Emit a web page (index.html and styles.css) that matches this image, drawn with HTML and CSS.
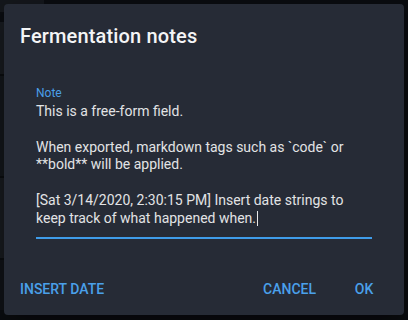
FILE: index.html
```html
<!DOCTYPE html>
<html lang="en">
<head>
<meta charset="utf-8">
<title>Fermentation notes</title>
<link rel="stylesheet" href="styles.css">
</head>
<body>
<div class="backdrop">
  <div class="bg-top"></div>
  <div class="bg-side">
    <div class="bg-row r1"></div>
    <div class="bg-row r2"></div>
    <div class="bg-row r3"></div>
    <div class="bg-row r4"></div>
  </div>
</div>
<div class="dialog">
  <h2 class="title">Fermentation notes</h2>
  <div class="content">
    <div class="field">
      <label class="label">Note</label>
      <div class="input">This is a free-form field.<br><br>When exported, markdown tags such as `code` or<br>**bold** will be applied.<br><br>[Sat 3/14/2020, 2:30:15 PM] Insert date strings to<br>keep track of what happened when.<span class="caret"></span></div>
    </div>
  </div>
  <div class="actions">
    <button class="btn">INSERT DATE</button>
    <span class="spacer"></span>
    <button class="btn">CANCEL</button>
    <button class="btn">OK</button>
  </div>
</div>
</body>
</html>
```

FILE: styles.css
```css
html, body {
  margin: 0;
  padding: 0;
}
body {
  width: 408px;
  height: 320px;
  overflow: hidden;
  background: #0b0d11;
  font-family: Roboto, "Liberation Sans", sans-serif;
  position: relative;
}
.backdrop {
  width: 408px;
  height: 320px;
  display: flex;
  flex-direction: column;
}
.bg-top {
  width: 44px;
  height: 12px;
  background: #15181d;
}
.bg-side {
  width: 6px;
  display: flex;
  flex-direction: column;
}
.bg-row {
  background: #181b20;
}
.bg-row.r1 { height: 52px; margin-top: 10px; }
.bg-row.r2 { height: 100px; margin-top: 2px; background: #14171b; }
.bg-row.r3 { height: 80px; margin-top: 2px; background: #181b20; }
.bg-row.r4 { height: 50px; margin-top: 2px; background: #121418; }

.dialog {
  position: absolute;
  left: 4px;
  top: 4px;
  width: 400px;
  height: 311px;
  box-sizing: border-box;
  background: #262b36;
  border-radius: 4px;
  box-shadow: 0 11px 15px -7px rgba(0,0,0,0.2), 0 24px 38px 3px rgba(0,0,0,0.14), 0 9px 46px 8px rgba(0,0,0,0.12);
  display: flex;
  flex-direction: column;
}
.title {
  margin: 0;
  padding: 16px 16px 0;
  font-size: 20px;
  line-height: 32px;
  font-weight: 500;
  color: #f4f5f6;
  letter-spacing: 0.15px;
}
.content {
  padding: 34px 32px 0;
}
.field {
  display: flex;
  flex-direction: column;
  border-bottom: 2px solid #3f9ce9;
}
.label {
  font-size: 12px;
  line-height: 14px;
  color: #4a9fe8;
}
.input {
  margin-top: 3px;
  padding-bottom: 10px;
  font-size: 14px;
  line-height: 17.75px;
  color: #e2e3e5;
  white-space: nowrap;
}
.caret {
  display: inline-block;
  width: 1px;
  height: 15px;
  background: #e8e8e8;
  vertical-align: -3px;
  margin-left: 1px;
}
.actions {
  margin-top: auto;
  padding: 8px;
  display: flex;
  align-items: center;
  gap: 8px;
}
.spacer {
  flex: 1;
}
.btn {
  background: none;
  border: 0;
  padding: 6px 8px;
  min-width: 64px;
  height: 36px;
  box-sizing: border-box;
  font-family: Roboto, "Liberation Sans", sans-serif;
  font-size: 14px;
  font-weight: 500;
  line-height: 24px;
  letter-spacing: 0;
  color: #4aa0ea;
  border-radius: 4px;
}
```
